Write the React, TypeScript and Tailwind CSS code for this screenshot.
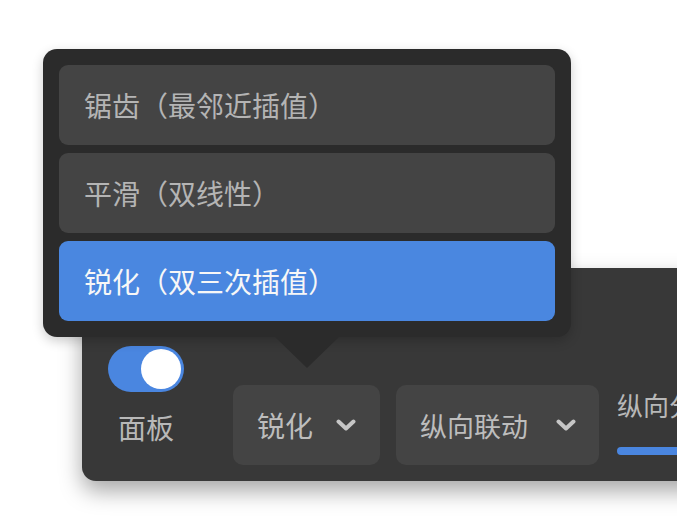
import React from "react";

const font = { fontFamily: '"Noto Sans CJK SC", "Noto Sans", sans-serif' };

function Chevron() {
  return (
    <svg width="20" height="12" viewBox="0 0 20 12" className="shrink-0">
      <polyline
        points="2.5,2.5 10,9.5 17.5,2.5"
        fill="none"
        stroke="#c6c6c6"
        strokeWidth="4"
        strokeLinecap="round"
        strokeLinejoin="round"
      />
    </svg>
  );
}

export default function App() {
  const items = [
    { label: "锯齿（最邻近插值）", active: false },
    { label: "平滑（双线性）", active: false },
    { label: "锐化（双三次插值）", active: true },
  ];
  return (
    <div
      className="relative w-[677px] h-[524px] bg-white overflow-hidden"
      style={font}
    >
      {/* toolbar panel */}
      <div className="absolute left-[82px] top-[268px] w-[720px] h-[213px] rounded-[14px] bg-[#383838] shadow-[0_10px_22px_rgba(0,0,0,0.35)] flex items-stretch pl-[26px] py-4">
        <div className="w-[76px] flex flex-col items-center justify-end pb-[24px]">
          <div className="w-[76px] h-[46px] rounded-full bg-[#4a86e0] flex items-center justify-end pr-[3px]">
            <div className="w-[40px] h-[40px] rounded-full bg-white" />
          </div>
          <div className="mt-[21px] text-[28px] leading-none text-[#b8b8b8]">
            面板
          </div>
        </div>
        <div className="ml-[24px] w-px bg-[#4c4c4c]" />
        <div className="ml-[25px] flex items-end">
          <div className="w-[147px] h-[80px] rounded-[10px] bg-[#444444] flex items-center justify-between pl-6 pr-6">
            <span className="text-[28px] leading-none text-[#bdbdbd]">锐化</span>
            <Chevron />
          </div>
          <div className="ml-4 w-[203px] h-[80px] rounded-[10px] bg-[#444444] flex items-center justify-between pl-6 pr-[23px]">
            <span className="text-[27px] leading-none text-[#bdbdbd]">纵向联动</span>
            <Chevron />
          </div>
          <div className="ml-[18px] flex flex-col pb-[10px]">
            <div className="text-[26px] leading-none text-[#b8b8b8] whitespace-nowrap">
              纵向分辨率
            </div>
            <div className="mt-[29px] h-[8px] w-[200px] rounded-full bg-[#4a86e0]" />
          </div>
        </div>
      </div>

      {/* popup menu */}
      <div className="absolute left-[43px] top-[49px] w-[528px] rounded-[14px] bg-[#2b2b2b] p-4 flex flex-col gap-2 shadow-[0_4px_12px_rgba(0,0,0,0.2)]">
        {items.map((it) => (
          <div
            key={it.label}
            className={
              it.active
                ? "h-[80px] rounded-[9px] bg-[#4a87e0] flex items-center pl-[25px] text-[28px] leading-none text-[#f7f7f7]"
                : "h-[80px] rounded-[9px] bg-[#444444] flex items-center pl-[25px] text-[28px] leading-none text-[#b4b4b4]"
            }
          >
            {it.label}
          </div>
        ))}
        <svg
          className="absolute left-[232px] top-[288px]"
          width="64"
          height="31"
          viewBox="0 0 64 31"
        >
          <polygon points="0,0 64,0 32,31" fill="#2b2b2b" />
        </svg>
      </div>
    </div>
  );
}
